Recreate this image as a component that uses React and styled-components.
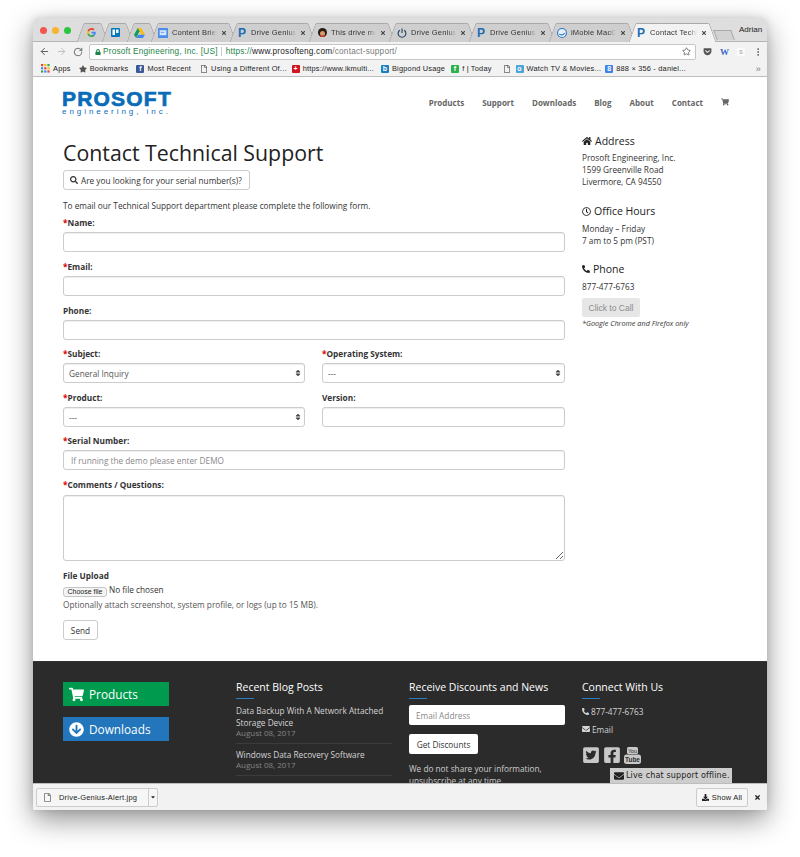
import styled, { createGlobalStyle } from "styled-components";
import {
  FaHome, FaRegClock, FaPhone, FaSearch, FaShoppingCart, FaArrowCircleDown,
  FaTwitterSquare, FaFacebookSquare, FaEnvelope, FaStar, FaSort, FaDownload,
  FaTimes, FaRegFile, FaLock, FaGetPocket, FaCaretDown,
} from "react-icons/fa";
import { ArrowLeft, ArrowRight, RotateCw, Star, MoreVertical } from "lucide-react";

const GlobalStyle = createGlobalStyle`
  html, body { margin: 0; padding: 0; background: #fff; }
  * { box-sizing: border-box; }
  body { font-family: "Open Sans", "Liberation Sans", sans-serif; color: #333; }
`;

const Backdrop = styled.div`
  width: 800px;
  height: 857px;
  padding: 18px 33px 47px;
  overflow: hidden;
`;

const Window = styled.div`
  height: 792px;
  display: flex;
  flex-direction: column;
  border-radius: 5px 5px 2px 2px;
  overflow: hidden;
  box-shadow: 0 10px 28px rgba(0, 0, 0, 0.42), 0 0 8px rgba(0, 0, 0, 0.12);
`;

const TabStrip = styled.div`
  height: 24px;
  flex: none;
  display: flex;
  align-items: flex-end;
  padding-left: 47px;
  background: #dedede;
  border-bottom: 1px solid #b4b4b4;
  position: relative;
`;

const Lights = styled.div`
  position: absolute;
  left: 7px;
  top: 9px;
  display: flex;
  gap: 5px;
`;

const Light = styled.span`
  width: 7px;
  height: 7px;
  border-radius: 50%;
  background: ${(p) => p.$color};
`;

const Tab = styled.div`
  width: ${(p) => p.$width}px;
  height: 19px;
  margin-bottom: -1px;
  flex: none;
  display: flex;
  align-items: center;
  gap: 4px;
  padding: 0 6px 0 ${(p) => p.$pad}px;
  position: relative;
  font: 7.5px "Liberation Sans", sans-serif;
  letter-spacing: 0.2px;
  color: #333;
  z-index: ${(p) => (p.$active ? 2 : 1)};

  &::before, &::after {
    content: "";
    position: absolute;
    top: 0;
    bottom: 0;
    width: 60%;
    background: ${(p) => (p.$active ? "#f2f2f2" : "#cfcfcf")};
    border-top: 1px solid #a9a9a9;
    z-index: -1;
  }
  &::before {
    left: 0;
    border-left: 1px solid #a9a9a9;
    border-radius: 2px 0 0 0;
    transform: skewX(-20deg);
  }
  &::after {
    right: 0;
    border-right: 1px solid #a9a9a9;
    border-radius: 0 2px 0 0;
    transform: skewX(20deg);
  }
`;

const TabTitle = styled.span`
  flex: 1;
  overflow: hidden;
  white-space: nowrap;
  min-width: 0;
  -webkit-mask-image: linear-gradient(to right, #000 82%, transparent);
  mask-image: linear-gradient(to right, #000 82%, transparent);
`;

const TabClose = styled(FaTimes)`
  width: 6px;
  height: 6px;
  color: #444;
  flex: none;
`;

const PFavicon = styled.span`
  font: bold 12px "Liberation Sans", sans-serif;
  color: #1b6cb5;
  width: 9px;
  flex: none;
`;

const NewTab = styled.div`
  width: 18px;
  height: 10px;
  margin: 0 0 1px 2px;
  background: #d2d2d2;
  border: 1px solid #aaa;
  border-bottom: 0;
  transform: skewX(20deg);
  flex: none;
`;

const Profile = styled.span`
  font: 8px "Liberation Sans", sans-serif;
  color: #222;
  margin: 0 0 7px 6px;
  align-self: flex-end;
`;

const Toolbar = styled.div`
  height: 19px;
  flex: none;
  display: flex;
  align-items: center;
  padding: 0 4px 0 6px;
  gap: 6px;
  background: #f2f2f2;
  color: #555;
`;

const Omnibox = styled.div`
  width: 607px;
  height: 16px;
  flex: none;
  display: flex;
  align-items: center;
  padding: 0 4px 0 5px;
  background: #fff;
  border: 1px solid #c6c6c6;
  border-radius: 2px;
  font: 8.25px "Liberation Sans", sans-serif;
  letter-spacing: 0.2px;
  white-space: nowrap;
`;

const Secure = styled.span`
  color: #1e8449;
  display: flex;
  align-items: center;
  gap: 2px;
  padding-right: ${(p) => (p.$plain ? 0 : 3)}px;
  margin-right: ${(p) => (p.$plain ? 0 : 4)}px;
  border-right: ${(p) => (p.$plain ? "0" : "1px solid #ccc")};
`;

const UrlHost = styled.span`
  color: #222;
`;

const UrlPath = styled.span`
  color: #777;
  flex: 1;
`;

const ExtIcons = styled.div`
  display: flex;
  align-items: center;
  gap: 8px;
  margin-left: 1px;
`;

const WordIcon = styled.span`
  font: bold 9px "Liberation Serif", serif;
  color: #3b67c4;
`;

const Bookmarks = styled.div`
  height: 16px;
  flex: none;
  display: flex;
  align-items: center;
  padding: 0 6px 0 8px;
  background: #f2f2f2;
  border-bottom: 1px solid #bdbdbd;
  font: 7.4px "Liberation Sans", sans-serif;
  letter-spacing: 0.2px;
  color: #222;
  white-space: nowrap;
`;

const Bookmark = styled.span`
  display: flex;
  align-items: center;
  gap: 3px;
  margin-right: ${(p) => p.$gap}px;
`;

const Swatch = styled.span`
  width: 8px;
  height: 8px;
  flex: none;
  border-radius: 1px;
  background: ${(p) => p.$color};
  color: ${(p) => p.$ink || "#fff"};
  font: bold 7px "Liberation Sans", sans-serif;
  line-height: 8px;
  text-align: center;
`;

const Chevrons = styled.span`
  margin-left: auto;
  color: #777;
  font-size: 9px;
`;

const Page = styled.div`
  flex: 1;
  min-height: 0;
  background: #fff;
  overflow: hidden;
  position: relative;
`;

const SiteHeader = styled.header`
  height: 54px;
  display: flex;
  justify-content: space-between;
  padding: 13px 38px 0 29px;
`;

const Logo = styled.div`
  color: #0a6cb8;
  width: 110px;
`;

const LogoMark = styled.div`
  font: 900 21px/17px "Liberation Sans", sans-serif;
  -webkit-text-stroke: 0.7px #0a6cb8;
  letter-spacing: 1.2px;
  white-space: nowrap;
`;

const LogoSub = styled.div`
  font: 8px/9px "Liberation Sans", sans-serif;
  letter-spacing: 2.95px;
  white-space: nowrap;
`;

const Nav = styled.nav`
  display: flex;
  align-items: center;
  gap: 18px;
  height: 24px;
  font-size: 8px;
  font-weight: 700;
  color: #666;
`;

const Content = styled.div`
  display: grid;
  grid-template-columns: 502px 156px;
  column-gap: 17px;
  padding-left: 30px;
  height: 530px;
`;

const Main = styled.main`
  padding-top: 8px;
`;

const Title = styled.h1`
  margin: 0;
  height: 31px;
  font-size: 21.3px;
  line-height: 28px;
  font-weight: 400;
  color: #222;
`;

const SearchButton = styled.button`
  display: flex;
  align-items: center;
  gap: 3px;
  height: 20px;
  padding: 0 7px 0 6px;
  background: #fff;
  border: 1px solid #ccc;
  border-radius: 3px;
  font: 8.25px "Open Sans", sans-serif;
  color: #333;
`;

const Intro = styled.p`
  margin: 9px 0 0;
  font-size: 8.25px;
  line-height: 13px;
`;

const Field = styled.div`
  margin-top: ${(p) => p.$top ?? 9}px;
  min-width: 0;
`;

const Label = styled.label`
  display: block;
  height: 15px;
  font-size: 8.25px;
  line-height: 12px;
  font-weight: 700;
  color: #333;
`;

const Required = styled.span`
  color: #e00000;
`;

const Input = styled.input`
  display: block;
  width: 100%;
  height: 20px;
  padding: 0 7px;
  background: #fff;
  border: 1px solid #ccc;
  border-radius: 3px;
  box-shadow: inset 0 1px 1px rgba(0, 0, 0, 0.07);
  font: 8.25px "Open Sans", sans-serif;
  color: #555;
  &::placeholder { color: #888; }
`;

const Textarea = styled.textarea`
  display: block;
  width: 100%;
  height: 66px;
  margin-top: 1px;
  background: #fff;
  border: 1px solid #ccc;
  border-radius: 3px;
  box-shadow: inset 0 1px 1px rgba(0, 0, 0, 0.07);
`;

const Columns = styled.div`
  display: grid;
  grid-template-columns: 242px 243px;
  column-gap: 17px;
  margin-top: -1px;
`;

const SelectBox = styled.div`
  height: 20px;
  display: flex;
  align-items: center;
  justify-content: space-between;
  padding: 0 3px 0 5px;
  border: 1px solid #ccc;
  border-radius: 3px;
  font-size: 8.25px;
  color: #555;
  box-shadow: inset 0 1px 1px rgba(0, 0, 0, 0.07);
`;

const SelectArrows = styled(FaSort)`
  width: 6px;
  height: 8px;
  color: #444;
`;

const FileRow = styled.div`
  display: flex;
  align-items: center;
  gap: 2px;
  height: 13px;
  margin-top: -1px;
  font-size: 8.25px;
  color: #333;
`;

const ChooseFile = styled.button`
  height: 10px;
  width: 44px;
  padding: 0;
  margin-top: 2px;
  background: #f5f5f5;
  border: 1px solid #c4c4c4;
  border-radius: 3px;
  font: 7px "Liberation Sans", sans-serif;
  color: #222;
`;

const FileName = styled.span`
  margin-bottom: 3px;
`;

const Hint = styled.p`
  margin: 0;
  font-size: 8.25px;
  line-height: 15px;
  color: #555;
`;

const SendButton = styled.button`
  display: block;
  margin-top: 8px;
  width: 35px;
  height: 20px;
  padding: 0;
  background: #fff;
  border: 1px solid #ccc;
  border-radius: 3px;
  font: 8.25px "Open Sans", sans-serif;
  color: #333;
`;

const Sidebar = styled.aside`
  padding-top: 3px;
`;

const SideTitle = styled.h4`
  display: flex;
  align-items: center;
  gap: 3px;
  margin: ${(p) => p.$top ?? 0}px 0 ${(p) => p.$bottom ?? 5}px;
  height: 14px;
  font-size: 10.5px;
  font-weight: 400;
  color: #222;
`;

const SideText = styled.div`
  font-size: 8.25px;
  line-height: 12px;
  color: #333;
`;

const CallButton = styled.button`
  display: block;
  width: 58px;
  height: 19px;
  margin-top: 5px;
  padding: 0;
  background: #e6e6e6;
  border: 0;
  border-radius: 2px;
  font: 8.5px "Liberation Sans", sans-serif;
  color: #8c8c8c;
`;

const SideNote = styled.div`
  margin-top: 1px;
  font-size: 7.25px;
  line-height: 11px;
  font-style: italic;
  color: #333;
`;

const SiteFooter = styled.footer`
  height: 140px;
  display: grid;
  grid-template-columns: repeat(4, 156px);
  column-gap: 17px;
  padding: 19px 0 0 30px;
  background: #2b2b2b;
  border-top: 1px solid #333;
  color: #ccc;
`;

const CtaStack = styled.div`
  padding-top: 1px;
`;

const CtaButton = styled.div`
  width: 106px;
  height: 24px;
  margin-bottom: 11px;
  display: flex;
  align-items: center;
  gap: 5px;
  padding-left: 6px;
  background: ${(p) => p.$color};
  color: #fff;
  font-size: 11.8px;
`;

const FooterTitle = styled.h4`
  margin: 0;
  font-size: 10.5px;
  line-height: 12px;
  font-weight: 400;
  color: #fff;
  white-space: nowrap;
  &::after {
    content: "";
    display: block;
    width: 18px;
    height: 1px;
    margin: 5px 0 6px;
    background: #2c7cc0;
  }
`;

const PostLink = styled.div`
  font-size: 8.25px;
  line-height: 12px;
  color: #d4d4d4;
`;

const PostDate = styled.div`
  margin-top: -1px;
  font-size: 8px;
  line-height: 10px;
  color: #858585;
  padding-bottom: 5px;
  margin-bottom: 5px;
  border-bottom: 1px solid #3c3c3c;
`;

const EmailInput = styled.input`
  display: block;
  width: 100%;
  height: 20px;
  padding: 0 7px;
  background: #fff;
  border: 0;
  border-radius: 2px;
  font: 8.25px "Open Sans", sans-serif;
  &::placeholder { color: #888; }
`;

const DiscountButton = styled.button`
  display: block;
  width: 69px;
  height: 20px;
  margin: 9px 0 9px;
  padding: 0;
  background: #fff;
  border: 0;
  border-radius: 2px;
  font: 8.25px "Open Sans", sans-serif;
  color: #333;
`;

const FooterNote = styled.div`
  font-size: 8.25px;
  line-height: 12px;
  color: #ccc;
`;

const ContactLine = styled.div`
  display: flex;
  align-items: center;
  gap: 2px;
  height: 12px;
  margin-bottom: 6px;
  font-size: 8.25px;
  color: #d4d4d4;
`;

const Socials = styled.div`
  display: flex;
  align-items: center;
  gap: 3px;
  margin-top: 11px;
  color: #c8c8c8;
`;

const ChatBadge = styled.div`
  position: absolute;
  left: 577px;
  bottom: 0;
  width: 122px;
  height: 15px;
  display: flex;
  align-items: center;
  gap: 2px;
  padding-left: 4px;
  background: #cdcdcd;
  font: 8px "DejaVu Sans", sans-serif;
  letter-spacing: 0.15px;
  color: #222;
  white-space: nowrap;
`;

const DownloadBar = styled.div`
  height: 27px;
  flex: none;
  display: flex;
  align-items: center;
  justify-content: space-between;
  padding: 0 6px 0 3px;
  background: #f2f2f2;
  border-top: 1px solid #bdbdbd;
  font: 7.5px "Liberation Sans", sans-serif;
  letter-spacing: 0.2px;
  color: #222;
`;

const DownloadItem = styled.div`
  width: 122px;
  height: 19px;
  display: flex;
  align-items: center;
  gap: 7px;
  padding-left: 6px;
  background: #f6f6f6;
  border: 1px solid #ccc;
  border-radius: 2px;
  white-space: nowrap;
`;

const DownloadName = styled.span`
  flex: 1;
`;

const DownloadCaret = styled.span`
  width: 9px;
  height: 17px;
  display: flex;
  align-items: center;
  justify-content: center;
  border-left: 1px solid #ccc;
`;

const ShowAll = styled.div`
  width: 52px;
  height: 19px;
  display: flex;
  align-items: center;
  justify-content: center;
  gap: 3px;
  background: #f6f6f6;
  border: 1px solid #ccc;
  border-radius: 2px;
`;

const BarEnd = styled.div`
  display: flex;
  align-items: center;
  gap: 6px;
`;

const GoogleIcon = () => (
  <svg width="9" height="9" viewBox="0 0 18 18">
    <path fill="#4285f4" d="M17.6 9.2c0-.6-.1-1.2-.2-1.7H9v3.3h4.8c-.2 1.1-.8 2-1.8 2.7v2.2h2.9c1.7-1.6 2.7-3.9 2.7-6.5z" />
    <path fill="#34a853" d="M9 18c2.4 0 4.5-.8 5.9-2.2L12 13.6c-.8.5-1.8.9-3 .9-2.3 0-4.3-1.6-5-3.7H1v2.3C2.5 16 5.5 18 9 18z" />
    <path fill="#fbbc05" d="M4 10.7c-.4-1.1-.4-2.3 0-3.4V5H1c-1.3 2.5-1.3 5.5 0 8l3-2.3z" />
    <path fill="#ea4335" d="M9 3.6c1.3 0 2.5.5 3.4 1.3L15 2.3C13.5.9 11.4 0 9 0 5.5 0 2.5 2 1 5l3 2.3c.7-2.1 2.7-3.7 5-3.7z" />
  </svg>
);

const TrelloIcon = () => (
  <svg width="9" height="9" viewBox="0 0 18 18">
    <rect width="18" height="18" rx="2" fill="#0079bf" />
    <rect x="3" y="3" width="5" height="11" fill="#fff" />
    <rect x="10" y="3" width="5" height="7" fill="#fff" />
  </svg>
);

const DriveIcon = () => (
  <svg width="11" height="10" viewBox="0 0 20 18">
    <path fill="#fbbc05" d="M7 0h6l7 12h-6z" />
    <path fill="#0f9d58" d="M7 0l3 6-6 12-4-6z" />
    <path fill="#4285f4" d="M4 18h12l4-6H8z" />
  </svg>
);

const DocIcon = () => (
  <svg width="10" height="10" viewBox="0 0 18 18" style={{ flex: "none" }}>
    <rect width="18" height="18" rx="1" fill="#4b8de8" />
    <rect x="3" y="4" width="12" height="9" fill="#d9e6fa" />
    <rect x="5" y="7" width="6" height="1.5" fill="#4b8de8" />
  </svg>
);

const FaceIcon = () => (
  <svg width="9" height="9" viewBox="0 0 18 18" style={{ flex: "none" }}>
    <circle cx="9" cy="9" r="9" fill="#2a1a14" />
    <circle cx="9" cy="11" r="5" fill="#d99a6c" />
    <path d="M4 15h10v3H4z" fill="#c0392b" />
  </svg>
);

const PowerIcon = () => (
  <svg width="10" height="10" viewBox="0 0 18 18" fill="none" stroke="#1d3f66" strokeWidth="2" style={{ flex: "none" }}>
    <path d="M5 4a7 7 0 1 0 8 0" />
    <path d="M9 1v8" />
  </svg>
);

const GlobeIcon = () => (
  <svg width="10" height="10" viewBox="0 0 18 18" style={{ flex: "none" }}>
    <circle cx="9" cy="9" r="8" fill="#e6f0fa" stroke="#2f79bf" strokeWidth="2" />
    <path d="M4 11c3 2 7 2 10-2" fill="none" stroke="#2f79bf" strokeWidth="2" />
  </svg>
);

const AppsIcon = () => (
  <svg width="9" height="9" viewBox="0 0 9 9">
    {["#ea4335", "#fbbc05", "#34a853", "#4285f4", "#ea4335", "#fbbc05", "#34a853", "#4285f4", "#ea4335"].map((c, i) => (
      <rect key={i} x={(i % 3) * 3.2} y={Math.floor(i / 3) * 3.2} width="2.2" height="2.2" fill={c} />
    ))}
  </svg>
);

const YoutubeIcon = () => (
  <svg width="17" height="17" viewBox="0 0 17 17">
    <rect x="3" y="0" width="11" height="7" rx="1.5" fill="#c8c8c8" />
    <text x="8.5" y="5.6" fontSize="5.4" textAnchor="middle" fontFamily="Liberation Sans" fill="#2b2b2b">You</text>
    <rect x="0" y="7.5" width="17" height="9.5" rx="2.5" fill="#c8c8c8" />
    <text x="8.5" y="14.5" fontSize="6.4" textAnchor="middle" fontFamily="Liberation Sans" fontWeight="bold" fill="#2b2b2b">Tube</text>
  </svg>
);

const Req = () => <Required>*</Required>;

const tabs = [
  { width: 25, icon: <GoogleIcon />, pad: 7 },
  { width: 25, icon: <TrelloIcon />, pad: 6 },
  { width: 24, icon: <DriveIcon />, pad: 4 },
  { width: 79, icon: <DocIcon />, title: "Content Brief:", pad: 4 },
  { width: 79, icon: <PFavicon>P</PFavicon>, title: "Drive Genius £", pad: 5 },
  { width: 80, icon: <FaceIcon />, title: "This drive mak", pad: 6 },
  { width: 80, icon: <PowerIcon />, title: "Drive Genius £", pad: 5 },
  { width: 80, icon: <PFavicon>P</PFavicon>, title: "Drive Genius £", pad: 5 },
  { width: 80, icon: <GlobeIcon />, title: "iMobie MacCle", pad: 5 },
  { width: 81, icon: <PFavicon>P</PFavicon>, title: "Contact Techn", pad: 5, active: true },
];

export default function App() {
  return (
    <Backdrop>
      <GlobalStyle />
      <Window>
        <TabStrip>
          <Lights>
            <Light $color="#f2564f" />
            <Light $color="#f8b42f" />
            <Light $color="#2cc53f" />
          </Lights>
          {tabs.map((t, i) => (
            <Tab key={i} $width={t.width} $pad={t.pad} $active={t.active}>
              {t.icon}
              {t.title && <TabTitle>{t.title}</TabTitle>}
              {t.title && <TabClose />}
            </Tab>
          ))}
          <NewTab />
          <Profile>Adrian</Profile>
        </TabStrip>

        <Toolbar>
          <ArrowLeft size={11} />
          <ArrowRight size={11} color="#bbb" />
          <RotateCw size={10} />
          <Omnibox>
            <Secure>
              <FaLock size={6} />
              Prosoft Engineering, Inc. [US]
            </Secure>
            <Secure $plain>https://</Secure>
            <UrlHost>www.prosofteng.com</UrlHost>
            <UrlPath>/contact-support/</UrlPath>
            <Star size={9} color="#555" />
          </Omnibox>
          <ExtIcons>
            <FaGetPocket size={9} color="#555" />
            <WordIcon>W</WordIcon>
            <Swatch $color="#fafafa" $ink="#bbb">s</Swatch>
            <MoreVertical size={10} />
          </ExtIcons>
        </Toolbar>

        <Bookmarks>
          <Bookmark $gap={8}><AppsIcon />Apps</Bookmark>
          <Bookmark $gap={8}><FaStar size={8} color="#555" />Bookmarks</Bookmark>
          <Bookmark $gap={9}><Swatch $color="#3b5998">f</Swatch>Most Recent</Bookmark>
          <Bookmark $gap={5}><FaRegFile size={8} color="#666" />Using a Different Of...</Bookmark>
          <Bookmark $gap={7}><Swatch $color="#d3141c">+</Swatch>https://www.ikmulti...</Bookmark>
          <Bookmark $gap={6}><Swatch $color="#1c7fc0">b</Swatch>Bigpond Usage</Bookmark>
          <Bookmark $gap={11}><Swatch $color="#2ab24b">f</Swatch>f | Today</Bookmark>
          <Bookmark $gap={5}><FaRegFile size={8} color="#666" /></Bookmark>
          <Bookmark $gap={4}><Swatch $color="#4aa5d8">o</Swatch>Watch TV &amp; Movies...</Bookmark>
          <Bookmark $gap={4}><Swatch $color="#3f83e6">8</Swatch>888 × 356 - daniel...</Bookmark>
          <Chevrons>»</Chevrons>
        </Bookmarks>

        <Page>
          <SiteHeader>
            <Logo>
              <LogoMark>PROSOFT</LogoMark>
              <LogoSub>engineering, inc.</LogoSub>
            </Logo>
            <Nav>
              <span>Products</span>
              <span>Support</span>
              <span>Downloads</span>
              <span>Blog</span>
              <span>About</span>
              <span>Contact</span>
              <FaShoppingCart size={8} />
            </Nav>
          </SiteHeader>

          <Content>
            <Main>
              <Title>Contact Technical Support</Title>
              <SearchButton><FaSearch size={8} />Are you looking for your serial number(s)?</SearchButton>
              <Intro>To email our Technical Support department please complete the following form.</Intro>

              <Field $top={5}>
                <Label><Req />Name:</Label>
                <Input />
              </Field>
              <Field>
                <Label><Req />Email:</Label>
                <Input />
              </Field>
              <Field>
                <Label>Phone:</Label>
                <Input />
              </Field>
              <Columns>
                <Field>
                  <Label><Req />Subject:</Label>
                  <SelectBox>General Inquiry<SelectArrows /></SelectBox>
                </Field>
                <Field>
                  <Label><Req />Operating System:</Label>
                  <SelectBox>---<SelectArrows /></SelectBox>
                </Field>
                <Field>
                  <Label><Req />Product:</Label>
                  <SelectBox>---<SelectArrows /></SelectBox>
                </Field>
                <Field>
                  <Label>Version:</Label>
                  <Input />
                </Field>
              </Columns>
              <Field $top={8}>
                <Label><Req />Serial Number:</Label>
                <Input placeholder="If running the demo please enter DEMO" />
              </Field>
              <Field>
                <Label><Req />Comments / Questions:</Label>
                <Textarea />
              </Field>
              <Field>
                <Label>File Upload</Label>
                <FileRow><ChooseFile>Choose file</ChooseFile><FileName>No file chosen</FileName></FileRow>
                <Hint>Optionally attach screenshot, system profile, or logs (up to 15 MB).</Hint>
              </Field>
              <SendButton>Send</SendButton>
            </Main>

            <Sidebar>
              <SideTitle $bottom={4}><FaHome size={10} />Address</SideTitle>
              <SideText>
                Prosoft Engineering, Inc.<br />
                1599 Greenville Road<br />
                Livermore, CA 94550
              </SideText>
              <SideTitle $top={16}><FaRegClock size={9} />Office Hours</SideTitle>
              <SideText>
                Monday – Friday<br />
                7 am to 5 pm (PST)
              </SideText>
              <SideTitle $top={15}><FaPhone size={8} style={{ transform: "scaleX(-1)" }} />Phone</SideTitle>
              <SideText>877-477-6763</SideText>
              <CallButton>Click to Call</CallButton>
              <SideNote>*Google Chrome and Firefox only</SideNote>
            </Sidebar>
          </Content>

          <SiteFooter>
            <CtaStack>
              <CtaButton $color="#009a4e"><FaShoppingCart size={15} />Products</CtaButton>
              <CtaButton $color="#2376bb"><FaArrowCircleDown size={15} />Downloads</CtaButton>
            </CtaStack>
            <div>
              <FooterTitle>Recent Blog Posts</FooterTitle>
              <PostLink>Data Backup With A Network Attached Storage Device</PostLink>
              <PostDate>August 08, 2017</PostDate>
              <PostLink>Windows Data Recovery Software</PostLink>
              <PostDate>August 08, 2017</PostDate>
            </div>
            <div>
              <FooterTitle>Receive Discounts and News</FooterTitle>
              <EmailInput placeholder="Email Address" />
              <DiscountButton>Get Discounts</DiscountButton>
              <FooterNote>We do not share your information, unsubscribe at any time.</FooterNote>
            </div>
            <div>
              <FooterTitle>Connect With Us</FooterTitle>
              <ContactLine><FaPhone size={7} style={{ transform: "scaleX(-1)" }} />877-477-6763</ContactLine>
              <ContactLine><FaEnvelope size={8} />Email</ContactLine>
              <Socials>
                <FaTwitterSquare size={18} />
                <FaFacebookSquare size={18} />
                <YoutubeIcon />
              </Socials>
            </div>
          </SiteFooter>
          <ChatBadge><FaEnvelope size={10} />Live chat support offline.</ChatBadge>
        </Page>

        <DownloadBar>
          <DownloadItem>
            <FaRegFile size={9} color="#777" />
            <DownloadName>Drive-Genius-Alert.jpg</DownloadName>
            <DownloadCaret><FaCaretDown size={6} /></DownloadCaret>
          </DownloadItem>
          <BarEnd>
            <ShowAll><FaDownload size={7} />Show All</ShowAll>
            <FaTimes size={7} />
          </BarEnd>
        </DownloadBar>
      </Window>
    </Backdrop>
  );
}
